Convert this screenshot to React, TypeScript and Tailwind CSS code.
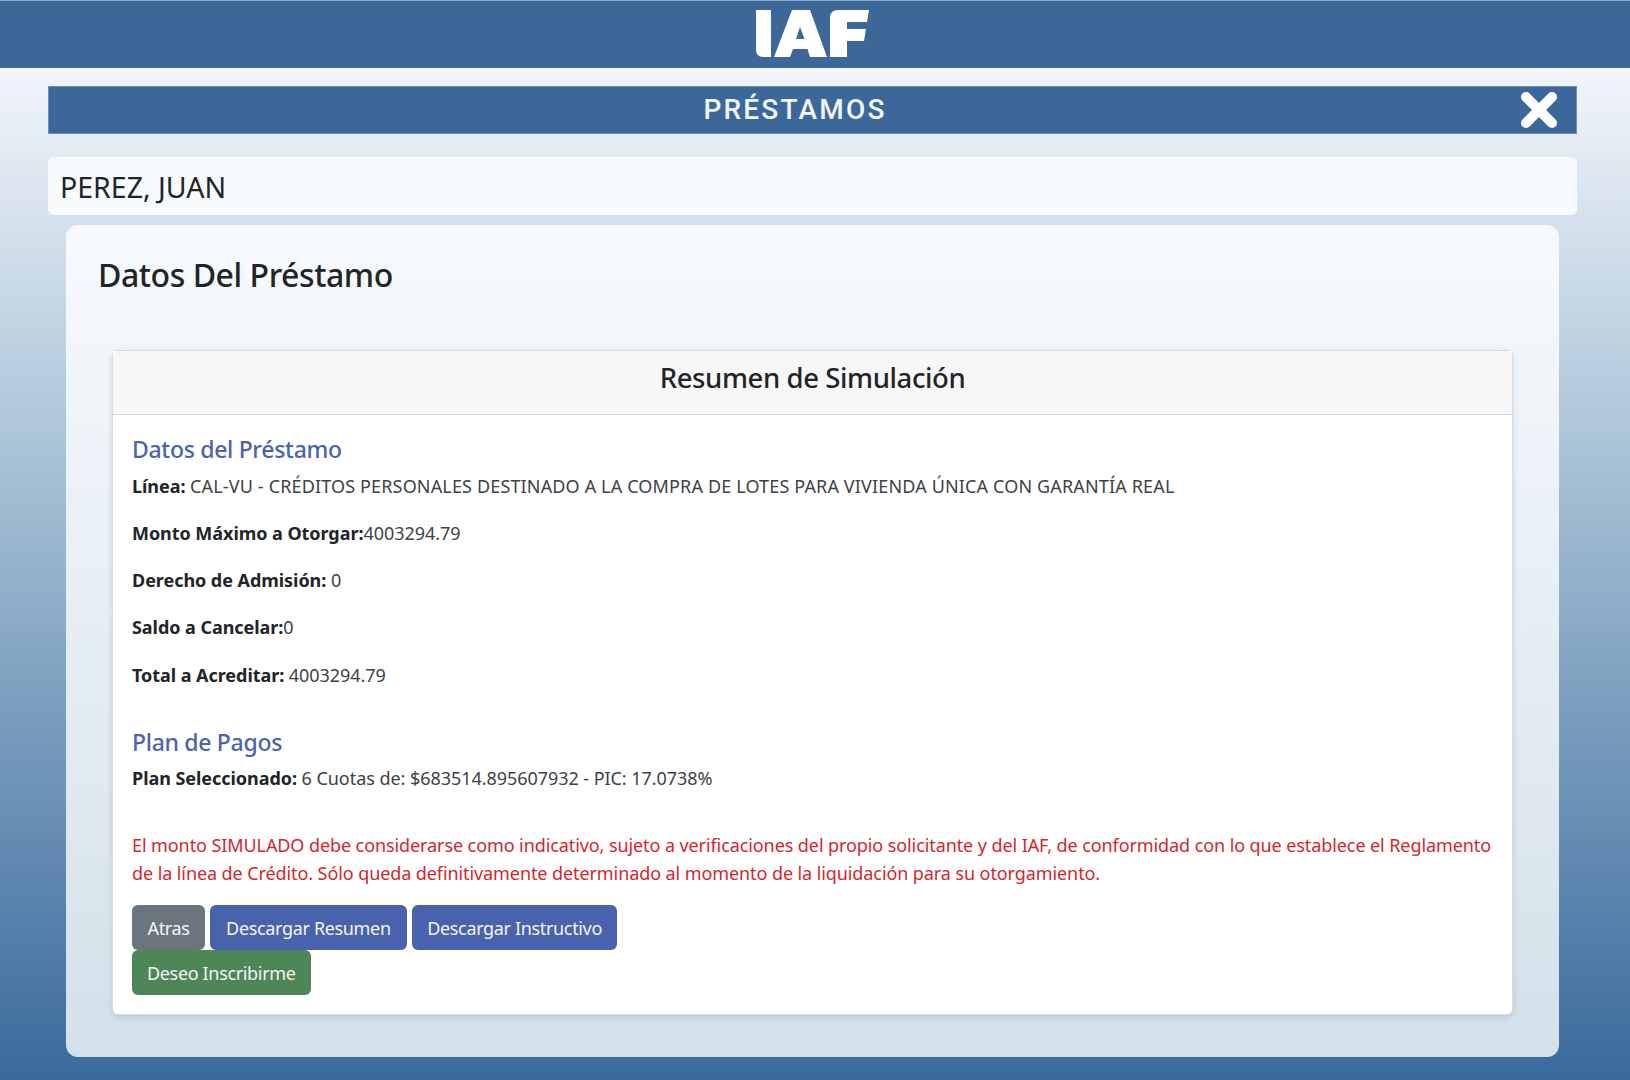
const font = "font-['Noto_Sans',sans-serif]";

function Logo() {
  return (
    <svg width="113" height="47" viewBox="0 0 113 47" fill="#fff" aria-label="IAF">
      <path d="M0 0H15V47H7Q0 47 0 39Z" />
      <path fillRule="evenodd" d="M36 0H54L71 47H54L51.5 39H37L34 47H18ZM44 17L40 29H48.5Z" />
      <path d="M74 47V8Q74 0 82 0H113L111 12H91V19H110L108 31H91V47Z" />
    </svg>
  );
}

function CloseIcon() {
  return (
    <svg width="38" height="38" viewBox="0 0 38 38" aria-hidden>
      <path d="M6 6L32 32M32 6L6 32" stroke="#fff" strokeWidth="10" strokeLinecap="round" />
    </svg>
  );
}

function Campo({ label, value, wide }: { label: string; value: string; wide?: boolean }) {
  return (
    <p className="mb-[19.3px]">
      <strong className="font-bold text-[#212529]">{label}</strong>
      <span className={wide ? "tracking-[0.15px]" : ""}>{value}</span>
    </p>
  );
}

export default function App() {
  return (
    <div className={`${font} min-h-[1080px] bg-gradient-to-b from-[#f3f6fb] from-[6%] via-[#a9c3d6] via-[42%] to-[#3a6a9c] to-[100%] text-[#212529]`}>
      <header className="flex h-[68px] items-center justify-center border-t border-[#8fa9c4] bg-[#3b6899] pb-[2px] pr-[6px]">
        <Logo />
      </header>

      <div className="px-[48px] pb-[22px] pt-[18px] pr-[53px]">
        <div className="relative flex h-[48px] items-center justify-center border border-[#6d90b5] bg-[#3b6899] pr-[35px]">
          <h1 className="font-['Roboto',sans-serif] text-[28px] font-medium tracking-[2.2px] text-[#f2f5f9]">PRÉSTAMOS</h1>
          <button className="absolute right-[18px] top-[4px]">
            <CloseIcon />
          </button>
        </div>
        <div className="mt-[23px] flex h-[58px] items-center rounded-[6px] bg-[#f8fbfe] px-[12px] pt-[2px] text-[28.5px] text-[#212529]">
          PEREZ, JUAN
        </div>
      </div>

      <main className="mx-[66px] mr-[71px] -mt-[12px] h-[832px] rounded-[12px] bg-gradient-to-b from-[#f7fafd] to-[#d3e1ea] px-[46px] pt-[28px]">
        <h2 className="ml-[-14px] text-[32px] font-medium leading-[44px] tracking-[-0.45px]">Datos Del Préstamo</h2>

        <section className="mt-[53px] rounded-[6px] border border-[#d9dbe0] bg-white shadow-[0_2px_6px_rgba(0,0,0,0.12)]">
          <div className="flex h-[64px] items-center justify-center border-b border-[#d5d7da] bg-[#f7f7f7] pb-[10px] text-[27.5px] font-medium tracking-[-0.4px]">
            Resumen de Simulación
          </div>

          <div className="px-[19px] pb-[19px] pt-[18px] text-[18px] leading-[28px] tracking-[-0.05px] text-[#3d4247]">
            <h3 className="mb-[6.5px] text-[23px] font-medium leading-[32px] tracking-[-0.3px] text-[#4a64ad]">Datos del Préstamo</h3>
            <Campo wide label="Línea: " value="CAL-VU - CRÉDITOS PERSONALES DESTINADO A LA COMPRA DE LOTES PARA VIVIENDA ÚNICA CON GARANTÍA REAL" />
            <Campo label="Monto Máximo a Otorgar:" value="4003294.79" />
            <Campo label="Derecho de Admisión: " value="0" />
            <Campo label="Saldo a Cancelar:" value="0" />
            <Campo label="Total a Acreditar: " value="4003294.79" />

            <h3 className="mb-[6.5px] mt-[37px] text-[23px] font-medium leading-[32px] tracking-[-0.3px] text-[#4a64ad]">Plan de Pagos</h3>
            <Campo label="Plan Seleccionado: " value="6 Cuotas de: $683514.895607932 - PIC: 17.0738%" />

            <p className="-mr-[8px] mb-[18px] mt-[39px] tracking-[-0.09px] text-[#d3262c]">
              El monto SIMULADO debe considerarse como indicativo, sujeto a verificaciones del propio solicitante y del IAF, de conformidad con lo que establece el Reglamento de la línea de Crédito. Sólo queda definitivamente determinado al momento de la liquidación para su otorgamiento.
            </p>

            <div className="flex flex-wrap gap-x-[5px] tracking-[-0.34px]">
              <button className="h-[45px] rounded-[6px] bg-[#6c757d] px-[15.5px] text-[#f4f5f6]">Atras</button>
              <button className="h-[45px] rounded-[6px] bg-[#4862ab] px-[16px] text-[#f4f5f6]">Descargar Resumen</button>
              <button className="h-[45px] rounded-[6px] bg-[#4862ab] px-[15.5px] text-[#f4f5f6]">Descargar Instructivo</button>
              <div className="basis-full" />
              <button className="h-[45px] rounded-[6px] bg-[#4e8757] px-[15px] text-[#f4f5f6]">Deseo Inscribirme</button>
            </div>
          </div>
        </section>
      </main>
      <div className="h-[23px]" />
    </div>
  );
}
